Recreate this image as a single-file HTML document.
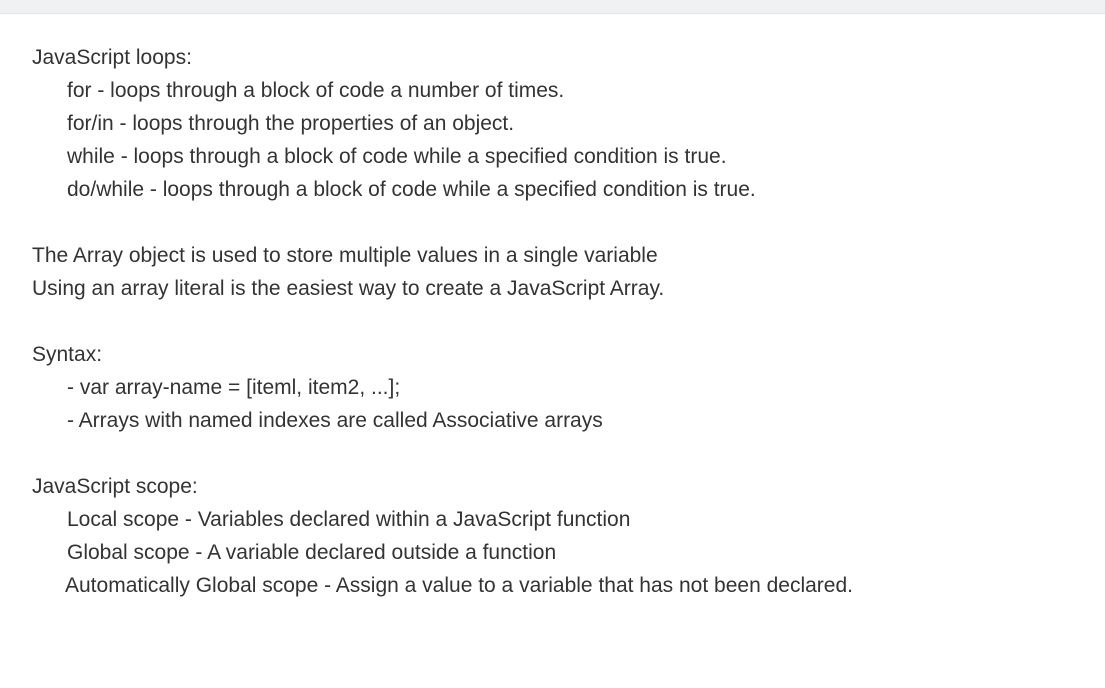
<!DOCTYPE html><html><head><style>
body{margin:0;width:1105px;height:688px;background:#fff;overflow:hidden;font-family:"Liberation Sans",sans-serif;font-size:21px;color:#333;}
.bar{height:13px;background:#eff1f3;border-bottom:1px solid #e3e6e9;}
.c{position:absolute;top:41px;left:32px;line-height:33px;white-space:nowrap;}
.i{padding-left:35px}
</style></head><body><div class="bar"></div>
<div class="c">
<div>JavaScript loops:</div>
<div class="i">for - loops through a block of code a number of times.</div>
<div class="i">for/in - loops through the properties of an object.</div>
<div class="i">while - loops through a block of code while a specified condition is true.</div>
<div class="i">do/while - loops through a block of code while a specified condition is true.</div>
<div>&nbsp;</div>
<div>The Array object is used to store multiple values in a single variable</div>
<div>Using an array literal is the easiest way to create a JavaScript Array.</div>
<div>&nbsp;</div>
<div>Syntax:</div>
<div class="i">- var array-name = [iteml, item2, ...];</div>
<div class="i">- Arrays with named indexes are called Associative arrays</div>
<div>&nbsp;</div>
<div>JavaScript scope:</div>
<div class="i">Local scope - Variables declared within a JavaScript function</div>
<div class="i">Global scope - A variable declared outside a function</div>
<div style="padding-left:33px">Automatically Global scope - Assign a value to a variable that has not been declared.</div>
</div></body></html>
